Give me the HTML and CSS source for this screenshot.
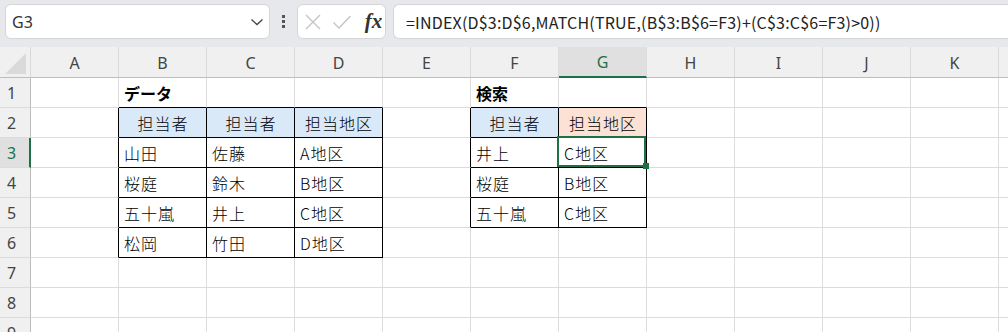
FILE: index.html
```html
<!DOCTYPE html>
<html lang="ja">
<head>
<meta charset="utf-8">
<link rel="stylesheet" href="styles.css">
</head>
<body>
<div class="toolbar">
  <div class="namebox">
    <span class="name">G3</span>
    <svg class="chev" width="14" height="8" viewBox="0 0 14 8"><polyline points="1.5,1.5 7,6.5 12.5,1.5" fill="none" stroke="#444" stroke-width="1.3"/></svg>
  </div>
  <div class="dots"><i></i><i></i><i></i></div>
  <div class="fnbox">
    <svg width="18" height="18" viewBox="0 0 18 18"><path d="M2 2 L16 16 M16 2 L2 16" stroke="#c4c4c4" stroke-width="1.4" fill="none"/></svg>
    <svg width="20" height="18" viewBox="0 0 20 18"><path d="M1.5 9.5 L7 15 L18.5 3" stroke="#c4c4c4" stroke-width="1.4" fill="none"/></svg>
    <span class="fx">fx</span>
  </div>
  <div class="formula">=INDEX(D$3:D$6,MATCH(TRUE,(B$3:B$6=F3)+(C$3:C$6=F3)&gt;0))</div>
</div>
<div class="sheet">
  <div class="corner"><span class="tri"></span></div>
  <div class="ch">A</div><div class="ch">B</div><div class="ch">C</div><div class="ch">D</div><div class="ch">E</div><div class="ch">F</div><div class="ch active">G</div><div class="ch">H</div><div class="ch">I</div><div class="ch">J</div><div class="ch">K</div><div class="ch"></div>

  <div class="rh">1</div>
  <div class="c"></div><div class="c tt bold">データ</div><div class="c tt"></div><div class="c tt"></div><div class="c"></div><div class="c tt bold">検索</div><div class="c tt"></div><div class="c"></div><div class="c"></div><div class="c"></div><div class="c"></div><div class="c"></div>

  <div class="rh">2</div>
  <div class="c tl"></div><div class="c t blue ctr">担当者</div><div class="c t blue ctr">担当者</div><div class="c t blue ctr">担当地区</div><div class="c tl"></div><div class="c t blue ctr">担当者</div><div class="c t peach ctr">担当地区</div><div class="c"></div><div class="c"></div><div class="c"></div><div class="c"></div><div class="c"></div>

  <div class="rh active">3</div>
  <div class="c tl"></div><div class="c t">山田</div><div class="c t">佐藤</div><div class="c t">A地区</div><div class="c tl"></div><div class="c t">井上</div><div class="c t selcell">C地区<span class="sel"></span><span class="handle"></span></div><div class="c"></div><div class="c"></div><div class="c"></div><div class="c"></div><div class="c"></div>

  <div class="rh">4</div>
  <div class="c tl"></div><div class="c t">桜庭</div><div class="c t">鈴木</div><div class="c t">B地区</div><div class="c tl"></div><div class="c t">桜庭</div><div class="c t">B地区</div><div class="c"></div><div class="c"></div><div class="c"></div><div class="c"></div><div class="c"></div>

  <div class="rh">5</div>
  <div class="c tl"></div><div class="c t">五十嵐</div><div class="c t">井上</div><div class="c t">C地区</div><div class="c tl"></div><div class="c t">五十嵐</div><div class="c t">C地区</div><div class="c"></div><div class="c"></div><div class="c"></div><div class="c"></div><div class="c"></div>

  <div class="rh">6</div>
  <div class="c tl"></div><div class="c t">松岡</div><div class="c t">竹田</div><div class="c t">D地区</div><div class="c"></div><div class="c"></div><div class="c"></div><div class="c"></div><div class="c"></div><div class="c"></div><div class="c"></div><div class="c"></div>

  <div class="rh">7</div>
  <div class="c"></div><div class="c"></div><div class="c"></div><div class="c"></div><div class="c"></div><div class="c"></div><div class="c"></div><div class="c"></div><div class="c"></div><div class="c"></div><div class="c"></div><div class="c"></div>

  <div class="rh">8</div>
  <div class="c"></div><div class="c"></div><div class="c"></div><div class="c"></div><div class="c"></div><div class="c"></div><div class="c"></div><div class="c"></div><div class="c"></div><div class="c"></div><div class="c"></div><div class="c"></div>

  <div class="rh">9</div>
  <div class="c"></div><div class="c"></div><div class="c"></div><div class="c"></div><div class="c"></div><div class="c"></div><div class="c"></div><div class="c"></div><div class="c"></div><div class="c"></div><div class="c"></div><div class="c"></div>
</div>
</body>
</html>
```

FILE: styles.css
```css
* { box-sizing: border-box; }
html, body { margin: 0; padding: 0; }
body {
  width: 1008px;
  height: 332px;
  overflow: hidden;
  background: #fff;
  font-family: "Noto Sans CJK JP", "Noto Sans", sans-serif;
}

.toolbar {
  height: 47px;
  background: #e6e8ec;
  display: flex;
  align-items: flex-start;
  padding: 4px 0 0 5px;
  white-space: nowrap;
}
.namebox {
  width: 267px;
  height: 35px;
  background: #fff;
  border: 1px solid #d6d6d6;
  border-radius: 6px;
  display: flex;
  align-items: center;
  justify-content: space-between;
  padding: 0 4px 0 6px;
}
.name {
  font-family: "Noto Sans", sans-serif;
  font-size: 16px;
  color: #333;
}
.chev { margin-right: 1px; margin-top: 1px; }
.dots {
  width: 27px;
  height: 35px;
  display: flex;
  flex-direction: column;
  align-items: center;
  justify-content: center;
  gap: 2px;
}
.dots i {
  display: block;
  width: 3px;
  height: 3px;
  background: #555;
}
.fnbox {
  width: 90px;
  height: 35px;
  background: #fff;
  border: 1px solid #d6d6d6;
  border-radius: 6px;
  display: flex;
  align-items: center;
  padding: 0 0 0 6px;
  gap: 10px;
}
.fx {
  font-family: "Liberation Serif", "DejaVu Serif", serif;
  font-style: italic;
  font-weight: bold;
  font-size: 21px;
  color: #333;
  margin-left: 3px;
}
.formula {
  margin-left: 7px;
  width: 620px;
  height: 35px;
  background: #fff;
  border: 1px solid #d6d6d6;
  border-right: none;
  border-radius: 6px 0 0 6px;
  display: flex;
  align-items: center;
  padding-left: 12px;
  font-family: "Noto Sans CJK JP", sans-serif;
  font-size: 16px;
  letter-spacing: 0.2px;
  color: #222;
}

.sheet {
  display: grid;
  grid-template-columns: 31px repeat(12, 88px);
  grid-template-rows: 31px repeat(9, 30px);
}
.corner {
  background: #f0f0f0;
  border-right: 1px solid #d9d9d9;
  border-bottom: 1px solid #bdbdbd;
  position: relative;
}
.tri {
  position: absolute;
  right: 4px;
  bottom: 3px;
  width: 0;
  height: 0;
  border-left: 21px solid transparent;
  border-bottom: 21px solid #dadada;
}
.ch {
  background: #f0f0f0;
  border-right: 1px solid #dcdcdc;
  border-bottom: 1px solid #bdbdbd;
  display: flex;
  align-items: center;
  justify-content: center;
  font-family: "Noto Sans", sans-serif;
  font-size: 16px;
  color: #444;
  padding-top: 1px;
}
.ch.active {
  background: #e0e0e0;
  color: #1e7145;
  border-bottom: 2px solid #1e7145;
}
.rh {
  background: #f0f0f0;
  border-right: 1px solid #bdbdbd;
  border-bottom: 1px solid #dcdcdc;
  display: flex;
  align-items: center;
  padding-left: 7px;
  font-family: "Noto Sans", sans-serif;
  font-size: 16px;
  color: #444;
}
.rh.active {
  background: #e0e0e0;
  color: #1e7145;
  border-right: 2px solid #1e7145;
}
.c {
  border-right: 1px solid #dcdcdc;
  border-bottom: 1px solid #dcdcdc;
  display: flex;
  align-items: center;
  padding-left: 5px;
  font-size: 16px;
  font-weight: 300;
  letter-spacing: 1px;
  color: #000;
  white-space: nowrap;
}
.c.t { border-right-color: #000; border-bottom-color: #000; }
.c.tl { border-right-color: #000; }
.c.tt { border-bottom-color: #000; }
.c.bold { font-weight: bold; letter-spacing: 0; }
.c.ctr { justify-content: center; padding-left: 1px; }
.c.blue { background: #dae9f8; }
.c.peach { background: #fbe2d5; }
.selcell { position: relative; }
.sel {
  position: absolute;
  top: -2px;
  left: -2px;
  right: 0;
  bottom: 0;
  border: 2px solid #1e7145;
  z-index: 2;
}
.handle {
  position: absolute;
  right: -3px;
  bottom: -2px;
  width: 6px;
  height: 6px;
  background: #1e7145;
  z-index: 3;
}
```
